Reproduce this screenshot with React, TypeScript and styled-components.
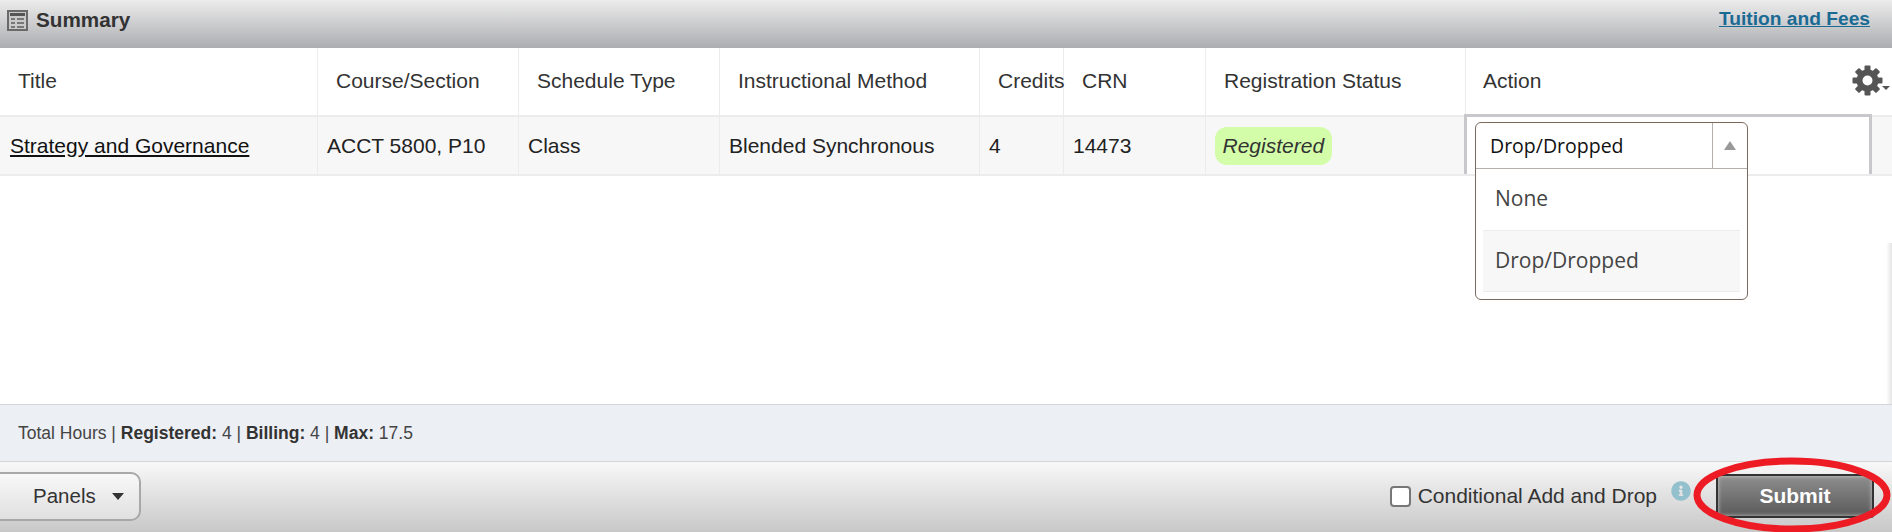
import React from 'react';
import styled, { createGlobalStyle } from 'styled-components';
import { FaInfoCircle } from 'react-icons/fa';

const columns = [
  { label: 'Title', width: 318, value: 'Strategy and Governance' },
  { label: 'Course/Section', width: 201, value: 'ACCT 5800, P10' },
  { label: 'Schedule Type', width: 201, value: 'Class' },
  { label: 'Instructional Method', width: 260, value: 'Blended Synchronous' },
  { label: 'Credits', width: 84, value: '4' },
  { label: 'CRN', width: 142, value: '14473' },
];

const gearTeeth = [0, 45, 90, 135, 180, 225, 270, 315];

const TableIcon = () => (
  <svg width="21" height="21" viewBox="0 0 21 21">
    <rect x="1" y="1" width="19" height="19" fill="#c9c9c9" stroke="#6a6a6a" strokeWidth="2" />
    <rect x="3" y="3" width="15" height="3" fill="#555" />
    <path
      d="M4 8h4v2H4zM10 8h7v2h-7zM4 12h4v2H4zM10 12h7v2h-7zM4 16h4v2H4zM10 16h7v2h-7z"
      fill="#777"
    />
  </svg>
);

const GearIcon = () => (
  <svg width="31" height="31" viewBox="0 0 31 31">
    {gearTeeth.map((angle) => (
      <rect
        key={angle}
        x="12.5"
        y="0.5"
        width="6"
        height="7"
        rx="1"
        fill="#555"
        transform={`rotate(${angle} 15.5 15.5)`}
      />
    ))}
    <circle cx="15.5" cy="15.5" r="8" fill="none" stroke="#555" strokeWidth="6" />
  </svg>
);

const App = () => {
  return (
    <Page>
      <GlobalStyle />
      <PanelHeader>
        <PanelTitle>
          <TableIcon />
          Summary
        </PanelTitle>
        <FeesLink href="#">Tuition and Fees</FeesLink>
      </PanelHeader>
      <Content>
        <HeadRow>
          {columns.map((col) => (
            <HeadCell key={col.label} $width={col.width}>
              {col.label}
            </HeadCell>
          ))}
          <HeadCell $width={260}>Registration Status</HeadCell>
          <ActionHead>
            Action
            <GearButton>
              <GearIcon />
              <GearCaret />
            </GearButton>
          </ActionHead>
        </HeadRow>
        <DataRow>
          {columns.map((col, i) => (
            <DataCell key={col.label} $width={col.width} $first={i === 0}>
              {i === 0 ? <CourseLink href="#">{col.value}</CourseLink> : col.value}
            </DataCell>
          ))}
          <DataCell $width={260}>
            <StatusBadge>Registered</StatusBadge>
          </DataCell>
          <ActionCell>
            <ActionSelect>
              <SelectBox>
                <SelectValue>Drop/Dropped</SelectValue>
                <SelectArrow>
                  <ArrowUp />
                </SelectArrow>
              </SelectBox>
              <OptionList>
                <Option>None</Option>
                <Option $selected>Drop/Dropped</Option>
              </OptionList>
            </ActionSelect>
          </ActionCell>
        </DataRow>
        <EdgeShadow />
      </Content>
      <HoursBar>
        Total Hours | <b>Registered:</b> 4 | <b>Billing:</b> 4 | <b>Max:</b> 17.5
      </HoursBar>
      <Toolbar>
        <PanelsButton>
          Panels
          <PanelsCaret />
        </PanelsButton>
        <ToolbarRight>
          <CheckLabel>
            <CheckBox type="checkbox" />
            Conditional Add and Drop
          </CheckLabel>
          <InfoIcon>
            <FaInfoCircle size={20} />
          </InfoIcon>
          <SubmitButton>Submit</SubmitButton>
        </ToolbarRight>
        <RedCircle width="202" height="80" viewBox="0 0 202 80">
          <ellipse cx="102" cy="38" rx="95" ry="34" fill="none" stroke="#ed1c24" strokeWidth="7" />
        </RedCircle>
      </Toolbar>
    </Page>
  );
};

export default App;

const GlobalStyle = createGlobalStyle`
  html, body {
    margin: 0;
    padding: 0;
    overflow: hidden;
    background: #fff;
  }
  body {
    font-family: "Liberation Sans", Arial, sans-serif;
  }
`;

const Page = styled.div`
  display: flex;
  flex-direction: column;
  width: 1892px;
  height: 532px;
  overflow: hidden;
`;

const PanelHeader = styled.div`
  display: flex;
  align-items: flex-start;
  justify-content: space-between;
  height: 48px;
  flex: none;
  padding: 0 22px 0 7px;
  box-sizing: border-box;
  background: linear-gradient(#ececec, #acadb1);
`;

const PanelTitle = styled.div`
  display: flex;
  align-items: center;
  gap: 8px;
  height: 40px;
  font-size: 20.7px;
  font-weight: 700;
  color: #333;
`;

const FeesLink = styled.a`
  margin-top: 8px;
  font-size: 19.2px;
  font-weight: 700;
  color: #1a6a94;
`;

const Content = styled.div`
  position: relative;
  flex: 1;
  background: #fff;
`;

const HeadRow = styled.div`
  display: flex;
  height: 69px;
  border-bottom: 2px solid #ececec;
  box-sizing: border-box;
`;

const HeadCell = styled.div<{ $width: number }>`
  display: flex;
  align-items: center;
  flex: none;
  width: ${({ $width }) => $width}px;
  padding: 0 0 2px 18px;
  box-sizing: border-box;
  border-right: 1px solid #ececec;
  font-size: 21px;
  color: #333;
`;

const ActionHead = styled.div`
  display: flex;
  align-items: center;
  justify-content: space-between;
  flex: 1;
  padding: 0 0 2px 17px;
  font-size: 21px;
  color: #333;
`;

const GearButton = styled.div`
  position: relative;
  display: flex;
  margin-right: 9px;
`;

const GearCaret = styled.div`
  position: absolute;
  right: -7px;
  bottom: 6px;
  border-left: 4px solid transparent;
  border-right: 4px solid transparent;
  border-top: 4px solid #555;
`;

const DataRow = styled.div`
  display: flex;
  height: 59px;
  background: #f7f7f7;
  border-bottom: 2px solid #ececec;
  box-sizing: border-box;
`;

const DataCell = styled.div<{ $width: number; $first?: boolean }>`
  display: flex;
  align-items: center;
  flex: none;
  width: ${({ $width }) => $width}px;
  padding-left: ${({ $first }) => ($first ? 10 : 9)}px;
  box-sizing: border-box;
  border-right: 1px solid #ececec;
  font-size: 21px;
  color: #222;
`;

const CourseLink = styled.a`
  color: #111;
  text-decoration: underline;
`;

const StatusBadge = styled.span`
  display: flex;
  align-items: center;
  height: 38px;
  padding: 0 7.5px;
  border-radius: 12px;
  background: #d3fda8;
  font-style: italic;
  color: #333;
`;

const ActionCell = styled.div`
  position: relative;
  flex: none;
  width: 408px;
  height: 60px;
  margin: -3px 0 0 -2px;
  padding: 5px 0 0 8px;
  box-sizing: border-box;
  background: #fff;
  border: 3px solid #c8c8cc;
  border-bottom: 0;
`;

const ActionSelect = styled.div`
  position: absolute;
  z-index: 2;
  width: 273px;
  box-sizing: border-box;
  background: #fff;
  border: 1px solid #7a6a5e;
  border-radius: 6px;
  font-family: "Open Sans", sans-serif;
  font-size: 21px;
`;

const SelectBox = styled.div`
  display: flex;
  height: 45px;
  border-bottom: 1px solid #b5b0ac;
`;

const SelectValue = styled.div`
  display: flex;
  align-items: center;
  flex: 1;
  padding-left: 14px;
  font-size: 19.5px;
  color: #111;
`;

const SelectArrow = styled.div`
  display: flex;
  align-items: center;
  justify-content: center;
  width: 34px;
  border-left: 1px solid #b5b0ac;
`;

const ArrowUp = styled.div`
  border-left: 6px solid transparent;
  border-right: 6px solid transparent;
  border-bottom: 9px solid #999;
`;

const OptionList = styled.div`
  padding: 0 7px 7px;
`;

const Option = styled.div<{ $selected?: boolean }>`
  display: flex;
  align-items: center;
  height: ${({ $selected }) => ($selected ? 62 : 61)}px;
  padding: 0 0 ${({ $selected }) => ($selected ? 2 : 3)}px 12px;
  box-sizing: border-box;
  color: #444;
  background: ${({ $selected }) => ($selected ? '#f7f7f7' : 'transparent')};
  border-top: ${({ $selected }) => ($selected ? '1px solid #ececec' : '0')};
  border-bottom: ${({ $selected }) => ($selected ? '1px solid #ececec' : '0')};
`;

const EdgeShadow = styled.div`
  position: absolute;
  right: 0;
  top: 195px;
  bottom: 0;
  width: 6px;
  background: linear-gradient(to right, rgba(0, 0, 0, 0), rgba(0, 0, 0, 0.1));
`;

const HoursBar = styled.div`
  display: flex;
  align-items: center;
  white-space: pre;
  flex: none;
  height: 58px;
  padding-left: 18px;
  box-sizing: border-box;
  background: #eceff4;
  border-top: 1px solid #d5d5d5;
  border-bottom: 1px solid #d5d5d5;
  font-size: 17.5px;
  color: #444;

  b {
    color: #333;
  }
`;

const Toolbar = styled.div`
  position: relative;
  display: flex;
  align-items: center;
  justify-content: space-between;
  flex: none;
  height: 70px;
  padding-bottom: 2px;
  box-sizing: border-box;
  background: linear-gradient(#f8f8f8, #c8c8c8);
`;

const PanelsButton = styled.div`
  display: flex;
  align-items: center;
  gap: 16px;
  height: 49px;
  width: 150px;
  margin-left: -9px;
  padding-left: 40px;
  box-sizing: border-box;
  border: 2px solid #a8a8a8;
  border-radius: 10px;
  background: linear-gradient(#f8f8f8, #e0e0e0);
  font-size: 20.5px;
  color: #333;
`;

const PanelsCaret = styled.div`
  border-left: 6px solid transparent;
  border-right: 6px solid transparent;
  border-top: 7px solid #333;
`;

const ToolbarRight = styled.div`
  display: flex;
  align-items: center;
  padding-right: 18px;
`;

const CheckLabel = styled.label`
  display: flex;
  align-items: center;
  gap: 7px;
  font-size: 21px;
  color: #333;
`;

const CheckBox = styled.input`
  appearance: none;
  width: 21px;
  height: 21px;
  margin: 0;
  background: #fff;
  border: 2px solid #777;
  border-radius: 4px;
  box-sizing: border-box;
`;

const InfoIcon = styled.span`
  display: flex;
  margin: -10px 0 0 14px;
  color: #92c0cc;
`;

const SubmitButton = styled.button`
  width: 158px;
  height: 44px;
  margin-left: 25px;
  border: 2px solid #333;
  border-radius: 3px;
  background: linear-gradient(#8e8e8e, #5a5a5a);
  box-shadow: inset 0 0 4px #ccc;
  font-family: "Liberation Sans", Arial, sans-serif;
  font-size: 21px;
  font-weight: 700;
  color: #fff;
`;

const RedCircle = styled.svg`
  position: absolute;
  right: 0;
  top: -5px;
  pointer-events: none;
`;
